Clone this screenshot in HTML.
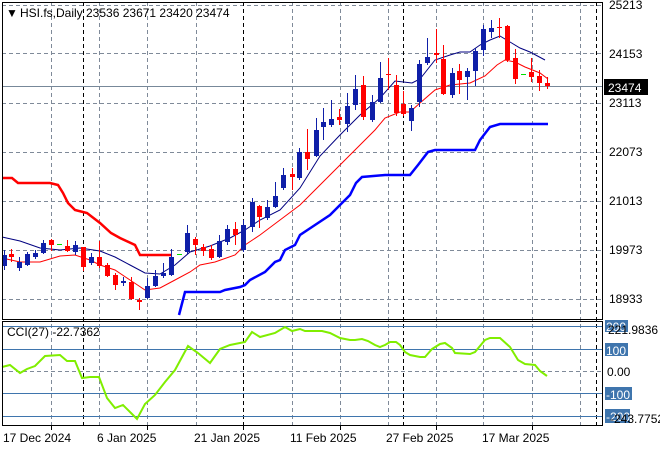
<!DOCTYPE html>
<html><head><meta charset="utf-8"><style>
body{margin:0;background:#fff;width:660px;height:450px;overflow:hidden;font-family:"Liberation Sans",sans-serif}
svg text{font-family:"Liberation Sans",sans-serif;font-size:12px}
</style></head><body>
<svg width="660" height="450" viewBox="0 0 660 450" xmlns="http://www.w3.org/2000/svg" shape-rendering="crispEdges">
<rect width="660" height="450" fill="#fff"/>
<g stroke="#7f8a99" stroke-dasharray="4,3" stroke-width="1">
<line x1="51.5" y1="2" x2="51.5" y2="426"/><line x1="99.5" y1="2" x2="99.5" y2="426"/><line x1="147.5" y1="2" x2="147.5" y2="426"/><line x1="196.5" y1="2" x2="196.5" y2="426"/><line x1="292.5" y1="2" x2="292.5" y2="426"/><line x1="340.5" y1="2" x2="340.5" y2="426"/><line x1="388.5" y1="2" x2="388.5" y2="426"/><line x1="436.5" y1="2" x2="436.5" y2="426"/><line x1="483.5" y1="2" x2="483.5" y2="426"/><line x1="532.5" y1="2" x2="532.5" y2="426"/><line x1="580.5" y1="2" x2="580.5" y2="426"/>
<line x1="2" y1="53.5" x2="603" y2="53.5"/><line x1="2" y1="103.5" x2="603" y2="103.5"/><line x1="2" y1="152.5" x2="603" y2="152.5"/><line x1="2" y1="201.5" x2="603" y2="201.5"/><line x1="2" y1="250.5" x2="603" y2="250.5"/><line x1="2" y1="299.5" x2="603" y2="299.5"/><line x1="2" y1="5.5" x2="603" y2="5.5"/>
<line x1="2" y1="371.5" x2="603" y2="371.5"/>
</g>
<g stroke="#000" stroke-dasharray="4,3" stroke-width="1">
<line x1="83.5" y1="2" x2="83.5" y2="426"/><line x1="243.5" y1="2" x2="243.5" y2="426"/><line x1="403.5" y1="2" x2="403.5" y2="426"/><line x1="596.5" y1="2" x2="596.5" y2="426"/>
</g>
<line x1="2" y1="86.5" x2="603" y2="86.5" stroke="#778899"/>
<g stroke="#3f75ad"><line x1="2" y1="326.5" x2="603" y2="326.5"/><line x1="2" y1="349.5" x2="603" y2="349.5"/><line x1="2" y1="393.5" x2="603" y2="393.5"/><line x1="2" y1="416.5" x2="603" y2="416.5"/></g>
<g fill="none" shape-rendering="auto">
<polyline stroke="#ff0000" stroke-width="2.5" points="2,178 12,178 18,183 50,183 58,185 63,193 68,203 75,210 87,213 100,223 111,233 120,238 135,245 140,255 171,255"/>
<polyline stroke="#0000ff" stroke-width="2.5" points="179,315 185,292 220,292 225,290 240,287 245,285 250,280 265,272 275,262 280,260 285,250 295,245 300,235 315,225 330,215 340,205 350,195 356,183 362,177 385,175 410,175 418,165 428,152 435,150 475,150 480,140 490,127 500,124 548,124"/>
<polyline stroke="#000080" stroke-width="1" points="2,237 20,241 40,248 60,250 80,248 100,251 115,257 130,265 145,273 160,274 175,265 190,252 210,246 230,238 245,230 260,220 280,210 300,188 320,156 340,135 360,115 380,98 395,81 412,83 420,79 435,60 450,55 460,52 470,52 480,45 490,40 500,36 510,42 520,48 530,52 545,60"/>
<polyline stroke="#ff0000" stroke-width="1" points="2,258 20,262 40,262 60,256 75,255 90,260 100,265 115,270 130,280 145,290 160,288 175,280 190,272 200,265 215,262 235,255 245,245 260,235 280,220 300,205 320,185 340,165 360,145 375,130 385,118 400,112 410,112 420,103 435,90 450,85 470,83 485,76 497,65 505,60 515,62 525,67 540,73 548,79"/>
<polyline stroke="#80ee00" stroke-width="2" points="2,367 10,365 20,373 27,369 35,366 45,356 60,355 67,361 75,361 82,378 90,377 99,377 107,398 115,408 123,405 131,413 137,419 145,404 155,395 165,382 175,370 188,346 198,353 210,363 220,349 230,345 245,342 252,332 260,337 275,333 285,327 292,331 300,329 305,331 322,331 330,333 340,338 350,340 355,340 362,339 368,341 375,345 380,347 385,345 390,342 396,342 400,345 405,352 410,355 420,357 425,357 432,349 440,344 445,343 452,348 455,353 470,354 475,352 485,340 490,338 500,338 510,347 518,360 525,364 535,365 540,371 547,376"/>
</g>
<g id="c"></g>
<rect x="2.5" y="2.5" width="600" height="317" fill="none" stroke="#000"/>
<rect x="2.5" y="321.5" width="600" height="104" fill="none" stroke="#000"/>
<g stroke="#000"><line x1="51.5" y1="426" x2="51.5" y2="430"/><line x1="147.5" y1="426" x2="147.5" y2="430"/><line x1="243.5" y1="426" x2="243.5" y2="430"/><line x1="340.5" y1="426" x2="340.5" y2="430"/><line x1="436.5" y1="426" x2="436.5" y2="430"/><line x1="532.5" y1="426" x2="532.5" y2="430"/></g>
<text x="6" y="17" font-size="9">▼</text>
<text x="20" y="17">HSI.fs,Daily  23536 23671 23420 23474</text>
<g fill="#000">
<text x="609" y="9">25213</text><text x="609" y="58">24153</text><text x="609" y="107">23113</text><text x="609" y="156">22073</text><text x="609" y="205">21013</text><text x="609" y="254">19973</text><text x="609" y="303">18933</text>
</g>
<rect x="604" y="79" width="44" height="16" fill="#000"/><text x="608" y="92" fill="#fff">23474</text>
<text x="7" y="336">CCI(27) -22.7362</text>
<rect x="605" y="320" width="23" height="12" fill="#3f75ad"/><text x="606" y="331" fill="#fff">200</text><text x="608" y="334">221.9836</text>
<rect x="605" y="343" width="23" height="13" fill="#3f75ad"/><text x="606" y="355" fill="#fff">100</text>
<text x="607" y="376">0.00</text>
<rect x="605" y="387" width="27" height="13" fill="#3f75ad"/><text x="606" y="399" fill="#fff">-100</text>
<rect x="605" y="409" width="25" height="14" fill="#3f75ad"/><text x="606" y="421" fill="#fff">-200</text><text x="610" y="423">-243.7752</text>
<g fill="#000"><text x="3" y="442">17 Dec 2024</text><text x="97" y="442">6 Jan 2025</text><text x="194" y="442">21 Jan 2025</text><text x="290" y="442">11 Feb 2025</text><text x="386" y="442">27 Feb 2025</text><text x="482" y="442">17 Mar 2025</text></g>
</svg>
<script>
var d=[[4,'B',255,266,250,270],[11,'R',254,257,249,262],[19,'B',262,268,257,271],[27,'B',254,265,252,266],[35,'B',253,257,250,259],[43,'B',243,253,240,254],[51,'R',240,245,239,251],[59,'G',244,244,244,244],[67,'R',246,251,240,252],[75,'B',245,252,241,255],[83,'R',247,267,247,271],[91,'B',257,263,253,265],[99,'R',257,266,241,268],[107,'R',265,276,263,277],[115,'R',275,285,273,290],[123,'B',281,283,277,286],[131,'R',282,299,277,300],[139,'R',300,302,298,310],[147,'B',286,298,278,299],[155,'B',276,286,270,287],[163,'B',273,276,263,278],[171,'B',257,275,249,276],[179,'G',254,254,254,254],[187,'B',233,252,225,254],[195,'R',239,245,237,255],[203,'R',247,251,244,256],[211,'R',249,258,245,260],[219,'B',241,257,235,258],[227,'B',229,242,225,245],[235,'R',229,235,222,245],[243,'B',225,250,220,252],[252,'B',202,227,198,232],[259,'R',206,217,205,228],[267,'B',207,218,200,220],[275,'B',196,207,182,208],[283,'B',175,188,168,190],[292,'R',174,177,168,190],[299,'B',152,178,148,180],[307,'R',152,159,129,170],[316,'B',130,156,118,157],[323,'B',122,127,108,140],[331,'B',119,125,100,127],[339,'R',117,120,109,125],[347,'B',106,124,93,132],[355,'B',89,105,75,110],[363,'R',85,117,76,120],[372,'B',102,120,95,122],[380,'B',78,102,62,103],[388,'R',74,75,58,90],[396,'R',85,113,75,116],[403,'R',104,114,91,116],[411,'B',108,121,105,131],[419,'B',64,102,60,107],[427,'B',57,63,38,65],[436,'R',53,55,29,63],[443,'R',59,94,45,95],[452,'B',73,95,68,98],[459,'R',71,80,64,94],[467,'B',71,77,68,100],[475,'B',51,71,48,86],[483,'B',29,50,25,56],[491,'B',28,32,20,38],[499,'R',27,28,18,38],[507,'R',26,60,25,62],[515,'R',58,79,49,84],[523,'G',74,74,74,74],[531,'R',72,77,58,82],[539,'R',76,83,70,91],[547,'R',83,86,77,89]];
var g=document.getElementById('c'),s='';
d.forEach(function(c){var col=c[1]=='B'?'#0f1fa8':(c[1]=='R'?'#ff0000':'#00dd00');
if(c[1]=='G'){s+='<rect x="'+(c[0]-2)+'" y="'+c[2]+'" width="5" height="1" fill="'+col+'"/>';return;}
s+='<rect x="'+c[0]+'" y="'+c[4]+'" width="1" height="'+(c[5]-c[4])+'" fill="'+col+'"/>';
s+='<rect x="'+(c[0]-2)+'" y="'+c[2]+'" width="5" height="'+Math.max(1,c[3]-c[2])+'" fill="'+col+'"/>';});
g.innerHTML=s;
</script>
</body></html>
